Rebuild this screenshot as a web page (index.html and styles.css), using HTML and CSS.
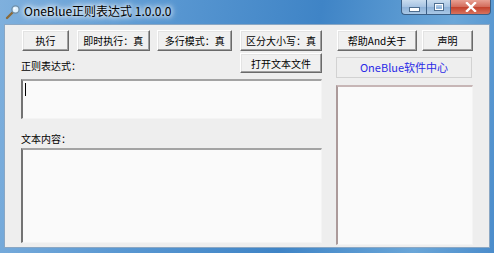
FILE: index.html
```html
<!DOCTYPE html>
<html lang="zh-CN">
<head>
    <meta charset="UTF-8">
    <title>OneBlue正则表达式 1.0.0.0</title>
    <link rel="stylesheet" href="styles.css">
</head>
<body>
<div class="window">
    <!-- title bar -->
    <div class="titlebar">
        <svg class="app-icon" width="16" height="16" viewBox="0 0 16 16">
            <line x1="2" y1="14" x2="8" y2="8" stroke="#8a6a3a" stroke-width="2.4" stroke-linecap="round"/>
            <circle cx="10.5" cy="5.5" r="3.6" fill="#dff1ff" stroke="#6f8fa8" stroke-width="1.4"/>
            <circle cx="9.6" cy="4.6" r="1" fill="#fff"/>
        </svg>
        <span class="title">OneBlue正则表达式 1.0.0.0</span>
        <div class="controls">
            <div class="ctl ctl-min"><span></span></div>
            <div class="ctl ctl-max"><span></span></div>
            <div class="ctl ctl-close">
                <svg width="12" height="10" viewBox="0 0 12 10">
                    <path d="M2 1 L10 9 M10 1 L2 9" stroke="#fff" stroke-width="2.4" stroke-linecap="square"/>
                </svg>
            </div>
        </div>
    </div>

    <div class="client">
        <div class="left">
            <div class="btn-row">
                <button class="btn w-run">执行</button>
                <button class="btn w-now">即时执行：真</button>
                <button class="btn w-multi">多行模式：真</button>
                <button class="btn w-case">区分大小写：真</button>
            </div>
            <div class="label-row">
                <span class="label">正则表达式：</span>
                <button class="btn btn-small w-case">打开文本文件</button>
            </div>
            <div class="field field-regex"><span class="caret"></span></div>
            <div class="label-row label-row-text">
                <span class="label">文本内容：</span>
            </div>
            <div class="field field-text"></div>
        </div>

        <div class="right">
            <div class="btn-row">
                <button class="btn w-help">帮助And关于</button>
                <button class="btn w-decl">声明</button>
            </div>
            <div class="link-box">OneBlue软件中心</div>
            <div class="field field-side"></div>
        </div>
    </div>
</div>
</body>
</html>
```

FILE: styles.css
```css
body {
    margin: 0;
    font-family: "Noto Sans CJK SC", "Noto Sans", sans-serif;
    font-size: 10px;
    color: #000;
    background: #5b97cf;
}

.window {
    width: 494px;
    height: 253px;
    display: flex;
    flex-direction: column;
    background: linear-gradient(100deg, #7fb0dd 0%, #5a98d2 30%, #3f84c6 60%, #6aa6d8 85%, #4b8ccb 100%);
    overflow: hidden;
}

/* Title bar */
.titlebar {
    height: 24px;
    display: flex;
    align-items: flex-start;
    position: relative;
}
.app-icon {
    margin: 4px 0 0 5px;
}
.title {
    margin: 3px 0 0 3px;
    font-size: 12px;
    line-height: 16px;
    white-space: nowrap;
    text-shadow: 0 0 4px #fff, 0 0 6px #fff, 0 0 8px rgba(255,255,255,0.9);
}
.controls {
    position: absolute;
    right: 3px;
    top: 0;
    display: flex;
}
.ctl {
    height: 15px;
    border: 1px solid #3b5f86;
    border-top: none;
    display: flex;
    align-items: center;
    justify-content: center;
    box-sizing: border-box;
}
.ctl-min,
.ctl-max {
    width: 25px;
    background: linear-gradient(#c9dcef, #a6c3e2 50%, #8fb2d8 51%, #a9c8e6);
}
.ctl-min {
    border-radius: 0 0 0 4px;
    border-right: none;
}
.ctl-min span {
    width: 9px;
    height: 3px;
    margin-top: 5px;
    background: #fff;
    border: 1px solid #4e6e90;
}
.ctl-max span {
    width: 8px;
    height: 6px;
    border: 1px solid #4e6e90;
    box-shadow: inset 0 0 0 1px #fff;
}
.ctl-close {
    width: 40px;
    border-radius: 0 0 4px 0;
    border-left: none;
    background: linear-gradient(#e8a093, #d26b5a 50%, #c3402b 51%, #d7735e);
}

/* Client area */
.client {
    flex: 1;
    margin: 0 4px 5px 4px;
    background-color: #eeeeee;
    background-image: radial-gradient(#f8f8f8 0.6px, transparent 0.7px);
    background-size: 2px 2px;
    border: 1px solid #8aa7c4;
    display: flex;
    gap: 14px;
    padding: 5px 0 0 16px;
}

.left {
    width: 301px;
    display: flex;
    flex-direction: column;
}
.right {
    width: 137px;
    display: flex;
    flex-direction: column;
}

.btn-row {
    display: flex;
    justify-content: space-between;
    padding-left: 1px;
}

.btn {
    height: 21px;
    padding: 0;
    font-family: inherit;
    font-size: 10px;
    line-height: 17px;
    white-space: nowrap;
    color: #000;
    background: #f0f0f0;
    border: 1px solid;
    border-color: #ffffff #6a6a6a #6a6a6a #ffffff;
    box-shadow: inset -1px -1px 0 #a0a0a0, inset 1px 1px 0 #e3e3e3;
    box-sizing: border-box;
}
.btn-small {
    height: 20px;
}
.w-run { width: 47px; }
.w-now { width: 73px; }
.w-multi { width: 75px; }
.w-case { width: 82px; }
.w-help { width: 80px; }
.w-decl { width: 51px; }

.label-row {
    display: flex;
    justify-content: space-between;
    align-items: center;
    margin-top: 2px;
    height: 20px;
}
.label {
    line-height: 14px;
    padding-top: 5px;
    white-space: nowrap;
}

.field {
    background: #fafafa;
    border-style: solid;
    border-width: 2px 1px 1px 2px;
    border-color: #a3a3a3 #f4f4f4 #f4f4f4 #737373;
    box-sizing: border-box;
}
.field-regex {
    height: 40px;
    margin-top: 6px;
    position: relative;
}
.caret {
    position: absolute;
    left: 2px;
    top: 2px;
    width: 1px;
    height: 13px;
    background: #000;
}
.label-row-text {
    margin-top: 7px;
    height: 20px;
}
.field-text {
    height: 95px;
    margin-top: 2px;
}

.link-box {
    height: 21px;
    margin-top: 6px;
    width: 136px;
    font-size: 11px;
    color: #2a2ae6;
    text-align: center;
    line-height: 19px;
    white-space: nowrap;
    border: 1px solid #d2d2d2;
    box-sizing: border-box;
}
.field-side {
    height: 160px;
    margin-top: 7px;
    border-color: #c7b6b6 #f4f4f4 #f4f4f4 #ab9a9a;
}
```
